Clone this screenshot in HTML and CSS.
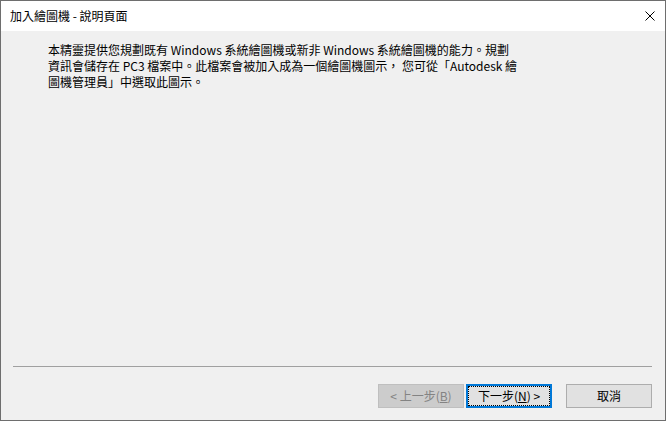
FILE: index.html
```html
<!DOCTYPE html>
<html lang="zh-Hant">
<head>
<meta charset="utf-8">
<title>加入繪圖機 - 說明頁面</title>
<link rel="stylesheet" href="styles.css">
</head>
<body>
<div class="window">
  <div class="titlebar">
    <span class="title">加入繪圖機 - 說明頁面</span>
    <span class="close">
      <svg width="10" height="10" viewBox="0 0 10 10"><path d="M0.5 0.5 L9.5 9.5 M9.5 0.5 L0.5 9.5" stroke="#000" stroke-width="1" fill="none"/></svg>
    </span>
  </div>
  <div class="content">
    <p class="desc">本精靈提供您規劃既有 Windows 系統繪圖機或新非 Windows 系統繪圖機的能力。規劃<br>資訊會儲存在 PC3 檔案中。此檔案會被加入成為一個繪圖機圖示， 您可從「Autodesk 繪<br>圖機管理員」中選取此圖示。</p>
    <div class="separator"></div>
    <div class="buttons">
      <button class="btn disabled" disabled>&lt; 上一步(<u>B</u>)</button>
      <button class="btn default">下一步(<u>N</u>) &gt;</button>
      <button class="btn cancel">取消</button>
    </div>
  </div>
</div>
</body>
</html>
```
FILE: styles.css
```css
* { box-sizing: border-box; }
html, body { margin: 0; padding: 0; background: #f0f0f0; }
body {
  font-family: "Noto Sans CJK TC", "Noto Sans", sans-serif;
  font-size: 12px;
  color: #000;
}
.window {
  width: 666px;
  height: 421px;
  border: 1px solid #6e6e6e;
  display: flex;
  flex-direction: column;
  background: #f0f0f0;
}
.titlebar {
  height: 30px;
  background: #fff;
  display: flex;
  align-items: center;
  justify-content: space-between;
  padding: 0 10px 0 9px;
}
.title {
  font-size: 12px;
  line-height: 14px;
  margin-top: -1px;
}
.close {
  display: flex;
  width: 10px;
  height: 10px;
  margin-top: -1px;
}
.content {
  flex: 1;
  display: flex;
  flex-direction: column;
  padding: 11px 13px 12px 12px;
}
.desc {
  margin: 0 0 0 35px;
  line-height: 16px;
  font-size: 12px;
}
.separator {
  margin-top: auto;
  height: 1px;
  background: #a0a0a0;
}
.buttons {
  margin-top: 17px;
  display: flex;
  justify-content: flex-end;
}
.btn {
  width: 86px;
  height: 24px;
  font-family: "Noto Sans CJK TC", "Noto Sans", sans-serif;
  font-size: 12px;
  line-height: 14px;
  padding: 0;
  background: #e1e1e1;
  border: 1px solid #adadad;
  color: #000;
}
.btn.disabled {
  background: #cccccc;
  border-color: #bfbfbf;
  color: #838383;
}
.btn.default {
  margin-left: 2px;
  border: 2px solid #0078d7;
  outline: 1px dotted #000;
  outline-offset: -3px;
}
.btn.cancel {
  margin-left: 14px;
}
```
